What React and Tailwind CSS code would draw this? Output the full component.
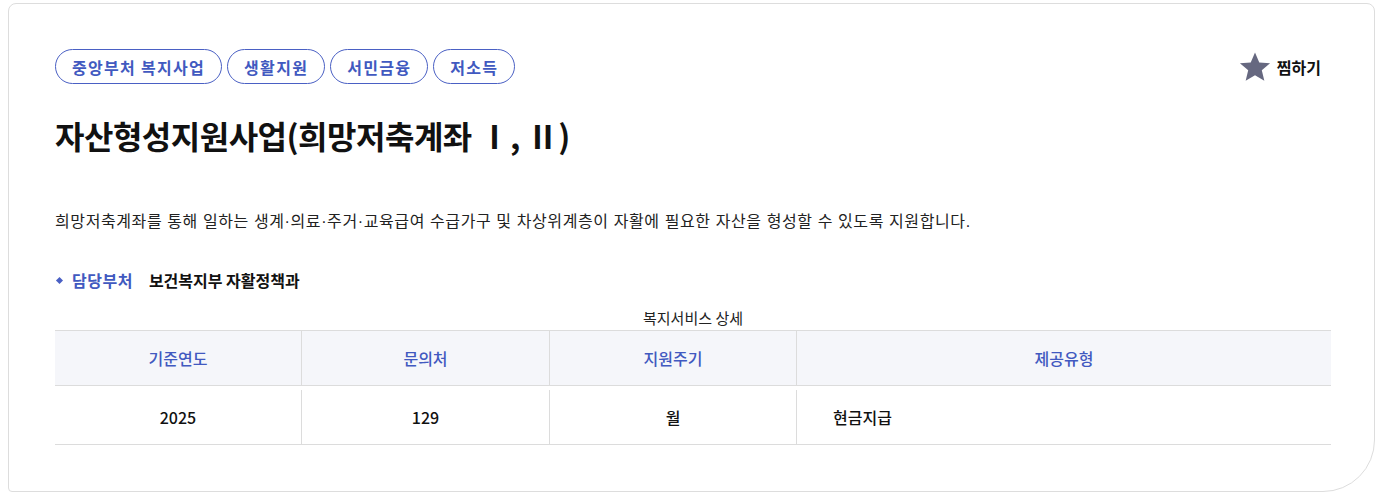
import React from "react";

const tags = ["중앙부처 복지사업", "생활지원", "서민금융", "저소득"];

const cols = [
  { head: "기준연도", value: "2025", w: "w-[246px]", center: true },
  { head: "문의처", value: "129", w: "w-[248px]", center: true },
  { head: "지원주기", value: "월", w: "w-[247px]", center: true },
  { head: "제공유형", value: "현금지급", w: "flex-1", center: false },
];

const App = () => {
  return (
    <div className="w-[1381px] h-[497px] bg-white pl-[8px] pt-[3px] font-['Noto_Sans_CJK_KR','Noto_Sans',sans-serif]">
      <div className="w-[1367px] h-[489px] border border-[#dddddd] rounded-tl-[8px] rounded-tr-[8px] rounded-bl-[4px] rounded-br-[52px] pl-[46px] pr-[43px] pt-[45px]">
        <div className="flex items-center justify-between">
          <div className="flex gap-[5px]">
            {tags.map((t) => (
              <span
                key={t}
                className="h-[35px] px-[16px] flex items-center rounded-full border border-[#4a60c4] text-[#4159c0] text-[16px] font-semibold tracking-[1.3px]"
              >
                {t}
              </span>
            ))}
          </div>
          <button className="flex items-center gap-[6px] mr-[10px] text-[16px] font-bold text-[#111]">
            <svg width="32" height="32" viewBox="0 0 24 24">
              <path
                fill="#666880"
                d="M12 1.2l3.2 7.4 8.1.6-6.2 5.3 1.9 7.9L12 18.2l-7 4.2 1.9-7.9-6.2-5.3 8.1-.6z"
              />
            </svg>
            찜하기
          </button>
        </div>

        <h1 className="mt-[29px] text-[32px] leading-[44px] font-bold text-[#111] tracking-[-0.5px]">
          자산형성지원사업(희망저축계좌 Ⅰ, Ⅱ)
        </h1>

        <p className="mt-[53px] text-[16px] leading-[24px] text-[#222] tracking-[0.6px] font-['Liberation_Sans','Noto_Sans_CJK_KR',sans-serif]">
          희망저축계좌를 통해 일하는 생계·의료·주거·교육급여 수급가구 및 차상위계층이 자활에 필요한 자산을 형성할 수 있도록 지원합니다.
        </p>

        <div className="mt-[34px] flex items-center text-[16px] leading-[24px]">
          <span className="w-[5px] h-[5px] bg-[#4a60c4] rotate-45 ml-[2px] mr-[10px]"></span>
          <span className="text-[#4159c0] font-semibold tracking-[0.5px]">담당부처</span>
          <span className="ml-[16px] text-[#111] font-bold">보건복지부 자활정책과</span>
        </div>

        <div className="mt-[15px] text-center text-[15px] leading-[22px] text-[#222]">
          복지서비스 상세
        </div>
        <div className="mt-[1px] border-t border-b border-[#dcdcdc]">
          <div className="flex bg-[#f5f6fa] border-b border-[#dcdcdc] h-[55px]">
            {cols.map((c, i) => (
              <div
                key={c.head}
                className={`${c.w} flex items-center justify-center text-[16px] font-medium text-[#4159c0] ${
                  i > 0 ? "border-l border-[#dcdcdc]" : ""
                }`}
              >
                {c.head}
              </div>
            ))}
          </div>
          <div className="flex h-[58px] pt-[4px]">
            {cols.map((c, i) => (
              <div
                key={c.head}
                className={`${c.w} flex items-center ${
                  c.center ? "justify-center" : "justify-start pl-[36px]"
                } text-[16px] font-medium text-[#111] ${i > 0 ? "border-l border-[#dcdcdc]" : ""}`}
              >
                {c.value}
              </div>
            ))}
          </div>
        </div>
      </div>
    </div>
  );
};

export default App;
